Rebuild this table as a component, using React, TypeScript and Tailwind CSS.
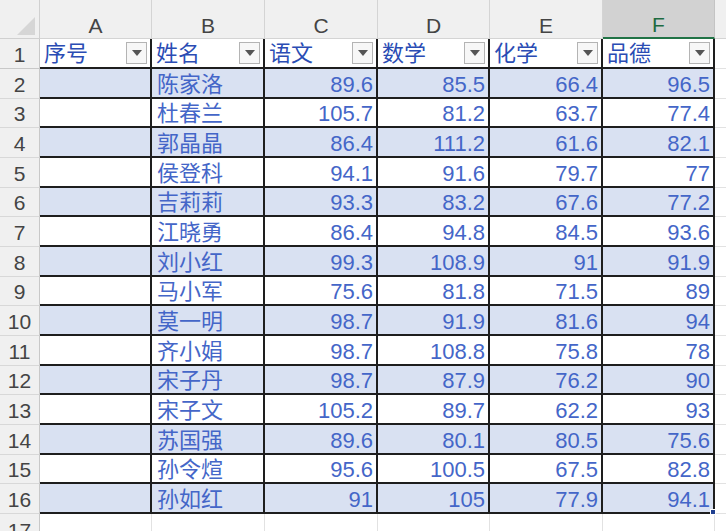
import React from "react";

const rows: [string, string, string, string, string][] = [
  ["陈家洛", "89.6", "85.5", "66.4", "96.5"],
  ["杜春兰", "105.7", "81.2", "63.7", "77.4"],
  ["郭晶晶", "86.4", "111.2", "61.6", "82.1"],
  ["侯登科", "94.1", "91.6", "79.7", "77"],
  ["吉莉莉", "93.3", "83.2", "67.6", "77.2"],
  ["江晓勇", "86.4", "94.8", "84.5", "93.6"],
  ["刘小红", "99.3", "108.9", "91", "91.9"],
  ["马小军", "75.6", "81.8", "71.5", "89"],
  ["莫一明", "98.7", "91.9", "81.6", "94"],
  ["齐小娟", "98.7", "108.8", "75.8", "78"],
  ["宋子丹", "98.7", "87.9", "76.2", "90"],
  ["宋子文", "105.2", "89.7", "62.2", "93"],
  ["苏国强", "89.6", "80.1", "80.5", "75.6"],
  ["孙令煊", "95.6", "100.5", "67.5", "82.8"],
  ["孙如红", "91", "105", "77.9", "94.1"],
];

const headers = ["序号", "姓名", "语文", "数学", "化学", "品德"];
const letters = ["A", "B", "C", "D", "E", "F"];

function FilterBtn() {
  return (
    <div className="absolute right-[3px] top-[3px] w-[21px] h-[22px] border border-[#b4b4b4] bg-[#f7f7f7] flex items-center justify-center">
      <svg width="10" height="6" viewBox="0 0 10 6">
        <path d="M0 0 L10 0 L5 6 Z" fill="#555" />
      </svg>
    </div>
  );
}

export default function App() {
  const font = "font-['Liberation_Sans','Noto_Sans_CJK_SC',sans-serif]";
  return (
    <div className={`w-[726px] h-[531px] overflow-hidden bg-white ${font}`}>
      <div className="grid grid-cols-[40px_112px_113px_113px_112px_113px_112px_1fr] grid-rows-[39px_30px_repeat(15,29.67px)_30px]">
        {/* corner */}
        <div className="relative bg-[#f0f0f0] border-r border-b border-[#d0d0d0]">
          <svg className="absolute right-[4px] bottom-[3px]" width="18" height="18" viewBox="0 0 18 18">
            <path d="M18 0 L18 18 L0 18 Z" fill="#d6d6d6" />
          </svg>
        </div>
        {letters.map((l, i) =>
          i === 5 ? (
            <div
              key={l}
              className="bg-[#d2d2d2] border-b-2 border-b-[#217346] border-r border-r-[#c4c4c4] flex items-end justify-center pb-[2px] text-[21px] leading-none text-[#1e6b41]"
            >
              {l}
            </div>
          ) : (
            <div
              key={l}
              className="bg-[#f0f0f0] border-r border-b border-[#d4d4d4] flex items-end justify-center pb-[2px] text-[21px] leading-none text-[#444]"
            >
              {l}
            </div>
          )
        )}
        <div className="bg-[#f0f0f0] border-b border-[#d4d4d4]" />

        {/* row 1 */}
        <div className="bg-[#f0f0f0] border-r border-b border-[#c8c8c8] flex items-end justify-center pb-[3px] text-[21px] leading-none text-[#444]">
          1
        </div>
        {headers.map((h) => (
          <div
            key={h}
            className="relative bg-white border-r-2 border-b-2 border-[#1e1e1e] flex items-end pl-[4px] pb-[2px] text-[22px] leading-none text-[#2a4cb4]"
          >
            {h}
            <FilterBtn />
          </div>
        ))}
        <div className="border-b border-[#e2e2e2]" />

        {rows.map((r, idx) => {
          const n = idx + 2;
          const fill = n % 2 === 0 ? "bg-[#d9e1f2]" : "bg-white";
          const cell = `${fill} border-r-2 border-b-2 border-[#1e1e1e] flex items-end pb-[1px] text-[22px] leading-none text-[#4466c8]`;
          return (
            <React.Fragment key={n}>
              <div className="bg-[#f0f0f0] border-r border-b border-[#d8d8d8] border-r-[#c8c8c8] flex items-end justify-center pb-[3px] text-[21px] leading-none text-[#444]">
                {n}
              </div>
              <div className={cell} />
              <div className={`${cell} pl-[5px]`}>{r[0]}</div>
              {r.slice(1).map((v, j) => (
                <div key={j} className={`${cell} justify-end pr-[3px] relative`}>
                  {v}
                  {n === 16 && j === 3 ? (
                    <div className="absolute right-[-3px] bottom-[-3px] w-[6px] h-[6px] bg-[#1f3f8f] border border-white" />
                  ) : null}
                </div>
              ))}
              <div className="border-b border-[#e2e2e2]" />
            </React.Fragment>
          );
        })}

        {/* row 17 */}
        <div className="bg-[#f0f0f0] border-r border-[#c8c8c8] flex items-start justify-center pt-[6px] text-[21px] leading-none text-[#444]">
          17
        </div>
        {letters.map((l) => (
          <div key={l} className="border-r border-[#e2e2e2]" />
        ))}
        <div />
      </div>
    </div>
  );
}
